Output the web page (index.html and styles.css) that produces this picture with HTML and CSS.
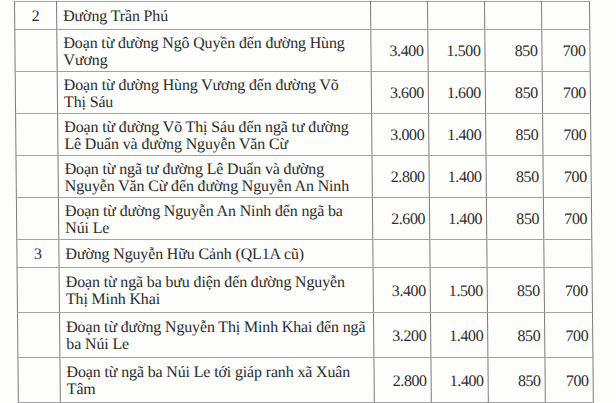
FILE: index.html
```html
<!DOCTYPE html>
<html lang="vi">
<head>
<meta charset="utf-8">
<title>Bảng giá đất</title>
<link rel="stylesheet" href="styles.css">
</head>
<body>
<div class="page">
<table class="price">
  <colgroup>
    <col class="c-stt"><col class="c-name"><col class="c-num"><col class="c-num"><col class="c-num"><col class="c-last">
  </colgroup>
  <tbody>
    <tr class="head">
      <td class="stt">2</td><td class="name">Đường Trần Phú</td><td></td><td></td><td></td><td></td>
    </tr>
    <tr class="r2">
      <td></td><td class="name">Đoạn từ đường Ngô Quyền đến đường Hùng<br>Vương</td>
      <td class="num">3.400</td><td class="num">1.500</td><td class="num">850</td><td class="num">700</td>
    </tr>
    <tr class="r2">
      <td></td><td class="name">Đoạn từ đường Hùng Vương đến đường Võ<br>Thị Sáu</td>
      <td class="num">3.600</td><td class="num">1.600</td><td class="num">850</td><td class="num">700</td>
    </tr>
    <tr class="r2">
      <td></td><td class="name">Đoạn từ đường Võ Thị Sáu đến ngã tư đường<br>Lê Duẩn và đường Nguyễn Văn Cừ</td>
      <td class="num">3.000</td><td class="num">1.400</td><td class="num">850</td><td class="num">700</td>
    </tr>
    <tr class="r2">
      <td></td><td class="name">Đoạn từ ngã tư đường Lê Duẩn và đường<br>Nguyễn Văn Cừ đến đường Nguyễn An Ninh</td>
      <td class="num">2.800</td><td class="num">1.400</td><td class="num">850</td><td class="num">700</td>
    </tr>
    <tr class="r2">
      <td></td><td class="name">Đoạn từ đường Nguyễn An Ninh đến ngã ba<br>Núi Le</td>
      <td class="num">2.600</td><td class="num">1.400</td><td class="num">850</td><td class="num">700</td>
    </tr>
    <tr class="head">
      <td class="stt">3</td><td class="name">Đường Nguyễn Hữu Cảnh (QL1A cũ)</td><td></td><td></td><td></td><td></td>
    </tr>
    <tr class="r3">
      <td></td><td class="name">Đoạn từ ngã ba bưu điện đến đường Nguyễn<br>Thị Minh Khai</td>
      <td class="num">3.400</td><td class="num">1.500</td><td class="num">850</td><td class="num">700</td>
    </tr>
    <tr class="r3">
      <td></td><td class="name">Đoạn từ đường Nguyễn Thị Minh Khai đến ngã<br>ba Núi Le</td>
      <td class="num">3.200</td><td class="num">1.400</td><td class="num">850</td><td class="num">700</td>
    </tr>
    <tr class="r3">
      <td></td><td class="name">Đoạn từ ngã ba Núi Le tới giáp ranh xã Xuân<br>Tâm</td>
      <td class="num">2.800</td><td class="num">1.400</td><td class="num">850</td><td class="num">700</td>
    </tr>
    <tr class="tail">
      <td></td><td></td><td></td><td></td><td></td><td></td>
    </tr>
  </tbody>
</table>
</div>
</body>
</html>
```

FILE: styles.css
```css
html, body {
  margin: 0;
  padding: 0;
  background: #fdfdfc;
  overflow: hidden;
}

.page {
  padding: 1px 0 0 14px;
}

.price {
  border-collapse: collapse;
  table-layout: fixed;
  width: 575px;
  font-family: "Liberation Serif", "Times New Roman", serif;
  font-size: 16px;
  line-height: 17px;
  color: #2c2c2c;
  transform: skewX(0.55deg);
  transform-origin: 0 0;
}

.c-stt { width: 42px; }
.c-name { width: 314px; }
.c-num { width: 57px; }
.c-last { width: 48px; }

.price td {
  border-top: 1px solid #a2a2a2;
  border-bottom: 1px solid #a2a2a2;
  border-left: 1px solid #7c7c7c;
  border-right: 1px solid #7c7c7c;
  padding: 0;
  vertical-align: middle;
  white-space: nowrap;
}

.price td.stt {
  text-align: center;
}

.price td.name {
  padding-left: 6px;
  letter-spacing: -0.15px;
}

.price td.num {
  text-align: right;
  padding-right: 4px;
  letter-spacing: -0.4px;
}

.head td { height: 27px; }
.r2 td { height: 41px; }
.r3 td { height: 44px; }
.tail td { height: 30px; }
```
